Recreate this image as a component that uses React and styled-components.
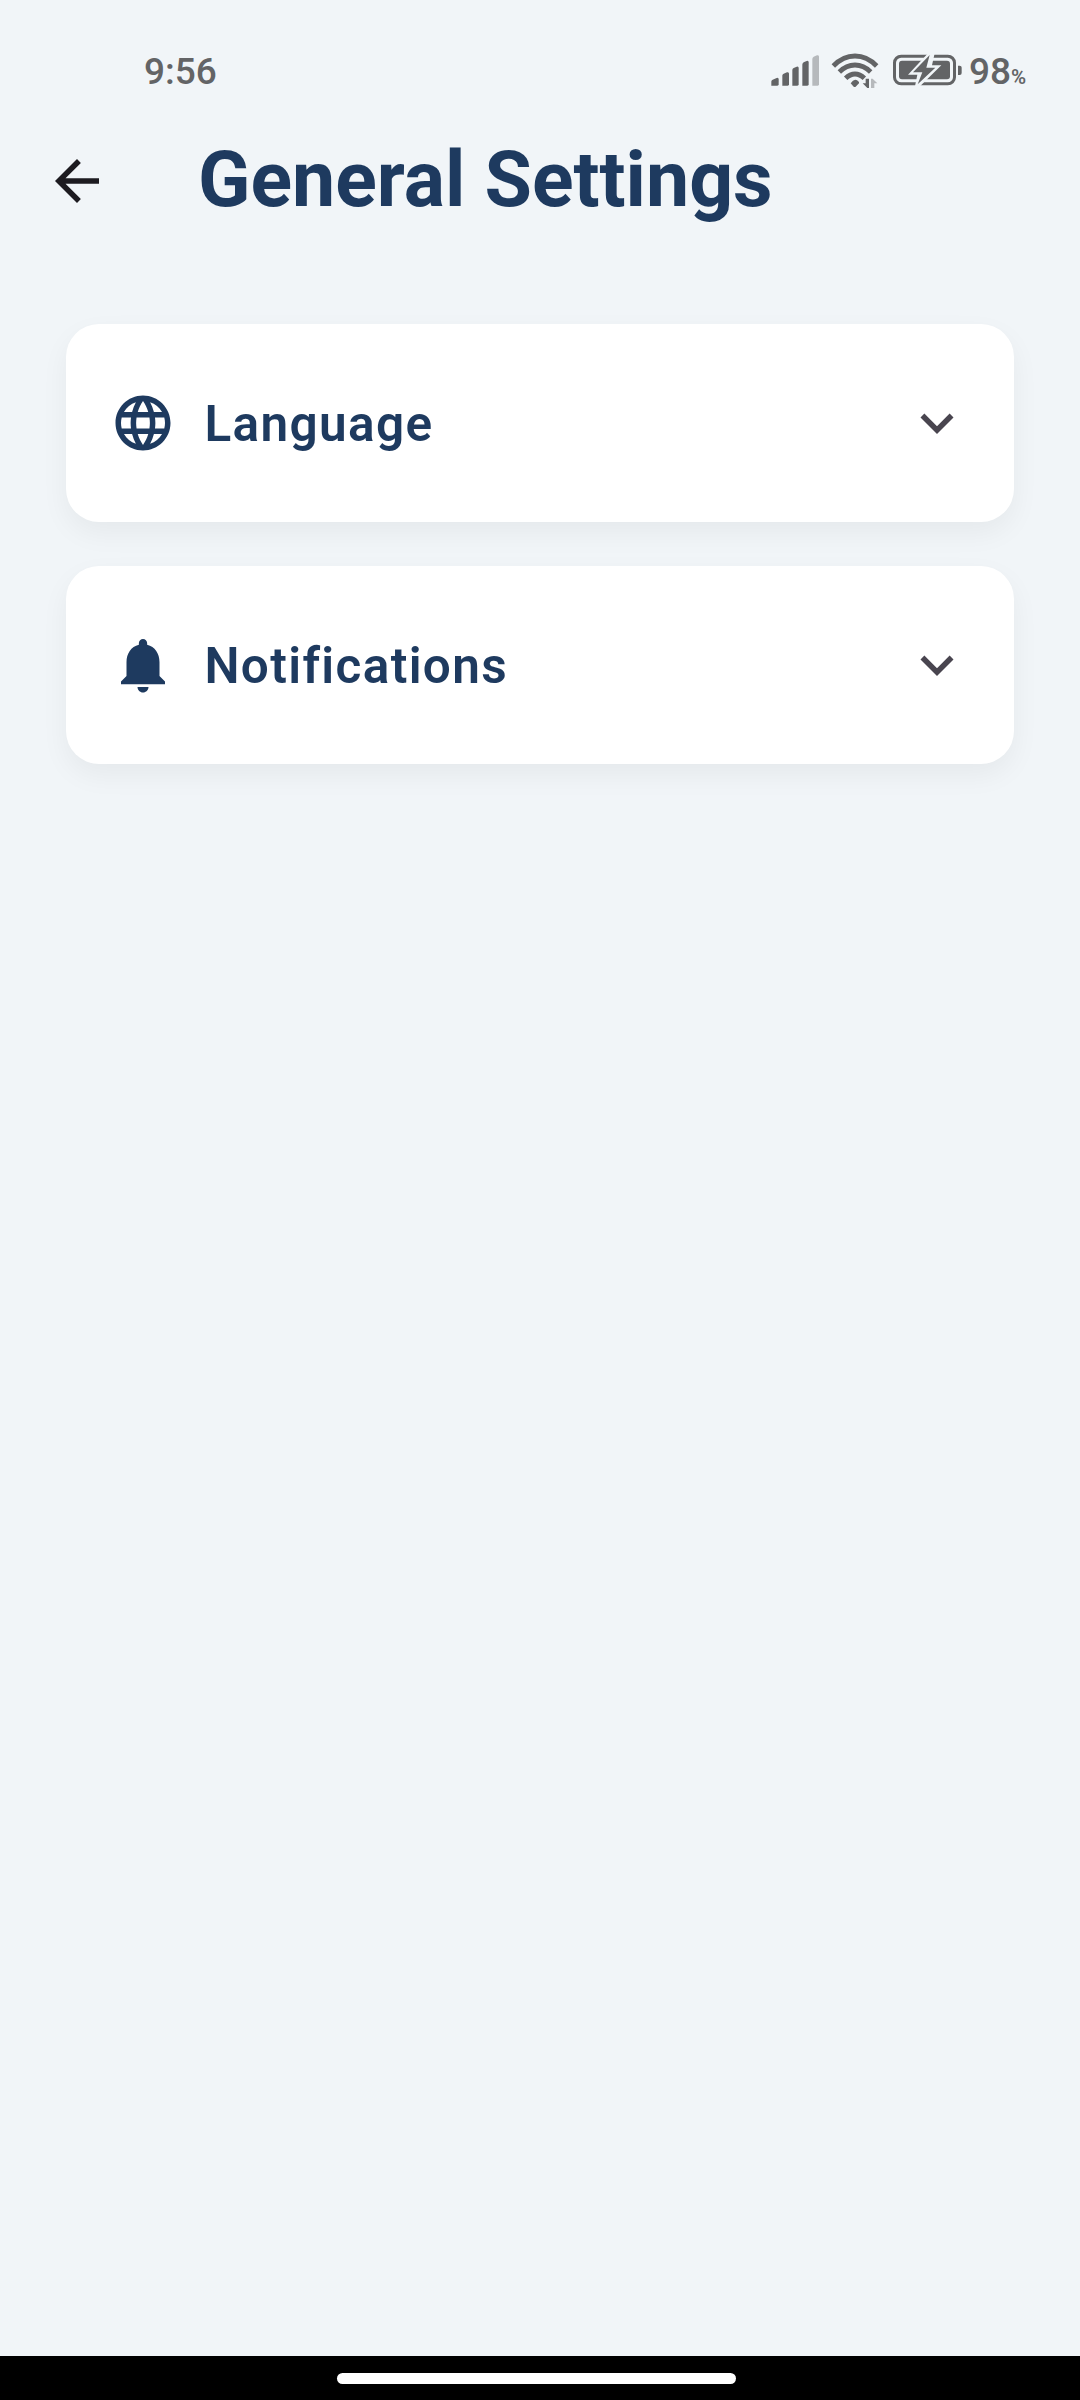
import React from "react";
import styled, { createGlobalStyle } from "styled-components";

const GlobalStyle = createGlobalStyle`
  *, *::before, *::after { box-sizing: border-box; }
  body {
    margin: 0;
    background: #f1f5f8;
    font-family: Roboto, "Noto Sans", sans-serif;
  }
`;

const Screen = styled.div`
  width: 1080px;
  height: 2400px;
  display: flex;
  flex-direction: column;
  background: #f1f5f8;
  overflow: hidden;
`;

const StatusBar = styled.header`
  height: 104px;
  flex: none;
  display: flex;
  justify-content: space-between;
  padding: 40px 0 0 144px;
  color: #636466;
`;

const Clock = styled.time`
  font-size: 37px;
  line-height: 44px;
  font-weight: 500;
  margin-top: 10px;
`;

const Indicators = styled.div`
  display: flex;
  width: 320px;
`;

const Glyphs = styled.svg`
  display: block;
  width: 209px;
  height: 60px;
  flex: none;
`;

const Battery = styled.span`
  display: flex;
  align-items: baseline;
  margin-top: 10px;
  font-size: 37px;
  line-height: 44px;
  font-weight: 500;
  height: 44px;
`;

const Percent = styled.span`
  font-size: 20.5px;
  line-height: 20px;
  font-weight: 600;
`;

const AppBar = styled.div`
  height: 154px;
  flex: none;
  display: flex;
  align-items: center;
  padding-left: 44px;
`;

const BackButton = styled.button`
  display: flex;
  padding: 0;
  border: 0;
  background: none;
  color: #1d1b20;
`;

const Title = styled.h1`
  margin: 0 0 2px 88px;
  color: #1e3a5f;
  font-size: 77px;
  line-height: 90px;
  font-weight: 700;
  white-space: nowrap;
`;

const Sections = styled.main`
  flex: 1;
  display: flex;
  flex-direction: column;
  gap: 44px;
  padding: 66px 66px 0;
`;

const Card = styled.section`
  height: 198px;
  display: flex;
  align-items: center;
  padding: 0 44px;
  border-radius: 33px;
  background: #fff;
  box-shadow: 0 11px 28px rgba(0, 0, 0, 0.05);
`;

const Icon = styled.svg`
  display: block;
  width: 66px;
  height: 66px;
  flex: none;
  fill: ${(p) => p.$color || "currentColor"};
`;

const Label = styled.h2`
  flex: 1;
  margin: 1px 0 0 28.5px;
  color: #1e3a5f;
  font-size: 49.5px;
  line-height: 60px;
  font-weight: 600;
  letter-spacing: 1.35px;
`;

const NavigationBar = styled.footer`
  height: 44px;
  flex: none;
  padding: 17px 0 0 337px;
  background: #000;
`;

const HomeHandle = styled.div`
  width: 399px;
  height: 11px;
  border-radius: 5.5px;
  background: #fff;
`;

const PATHS = {
  back: "M20 11H7.83l5.59-5.59L12 4l-8 8 8 8 1.41-1.41L7.83 13H20v-2z",
  language:
    "M11.99 2C6.47 2 2 6.48 2 12s4.47 10 9.99 10C17.52 22 22 17.52 22 12S17.52 2 11.99 2zm6.93 6h-2.95c-.32-1.25-.78-2.45-1.38-3.56 1.84.63 3.37 1.91 4.33 3.56zM12 4.04c.83 1.2 1.48 2.53 1.91 3.96h-3.82c.43-1.43 1.08-2.76 1.91-3.96zM4.26 14C4.1 13.36 4 12.69 4 12s.1-1.36.26-2h3.38c-.08.66-.14 1.32-.14 2s.06 1.34.14 2H4.26zm.82 2h2.95c.32 1.25.78 2.45 1.38 3.56-1.84-.63-3.37-1.9-4.33-3.56zm2.95-8H5.08c.96-1.66 2.49-2.93 4.33-3.56C8.81 5.55 8.35 6.75 8.03 8zM12 19.96c-.83-1.2-1.48-2.53-1.91-3.96h3.82c-.43 1.43-1.08 2.76-1.91 3.96zM14.34 14H9.66c-.09-.66-.16-1.32-.16-2s.07-1.35.16-2h4.68c.09.65.16 1.32.16 2s-.07 1.34-.16 2zm.25 5.56c.6-1.11 1.06-2.31 1.38-3.56h2.95c-.96 1.65-2.49 2.93-4.33 3.56zM16.36 14c.08-.66.14-1.32.14-2s-.06-1.34-.14-2h3.38c.16.64.26 1.31.26 2s-.1 1.36-.26 2h-3.38z",
  bell: "M12 22c1.1 0 2-.9 2-2h-4c0 1.1.9 2 2 2zm6-6v-5c0-3.07-1.63-5.64-4.5-6.32V4c0-.83-.67-1.5-1.5-1.5s-1.5.67-1.5 1.5v.68C7.64 5.36 6 7.92 6 11v5l-2 2v1h16v-1l-2-2z",
  expand: "M16.59 8.59L12 13.17 7.41 8.59 6 10l6 6 6-6z",
};

function MaterialIcon({ name, color }) {
  return (
    <Icon viewBox="0 0 24 24" $color={color} aria-hidden="true">
      <path d={PATHS[name]} />
    </Icon>
  );
}

function StatusGlyphs() {
  return (
    <Glyphs viewBox="0 0 627 180" fill="#636466" aria-hidden="true">
      <path d="M34 137V125Q34 121 38 119L50 114Q56 112 56 118V133Q56 137 52 137Z" />
      <path d="M67 137V107Q67 103 71 101L81 97Q87 95 87 101V133Q87 137 83 137Z" />
      <path d="M97 137V90Q97 86 101 84L110 80Q116 78 116 84V133Q116 137 112 137Z" />
      <path d="M127 137V74Q127 69 131 67L140 63Q146 61 146 67V133Q146 137 142 137Z" />
      <path d="M157 137V57Q157 52 161 50L171 46Q177 44 177 50V133Q177 137 173 137Z" fill="#b6b9bc" />
      <g fill="none" stroke="#636466" strokeWidth="14.5">
        <path d="M220 78Q249 48 285 48Q321 48 350 78" />
        <path d="M238 96Q259 75 285 75Q311 75 332 96" />
        <path d="M257 115Q270 102 285 102Q300 102 313 115" />
      </g>
      <path d="M272 130Q284 111 297 126V130L287 140Q284 142 281 140Z" />
      <path d="M317 116H327V144H322L308 130H317Z" />
      <path d="M333 144V116H338L352 130H343V144Z" fill="#b6b9bc" />
      <rect x="403.500" y="48.500" width="180" height="83" rx="20" fill="none" stroke="#636466" strokeWidth="9" />
      <rect x="417" y="62" width="153" height="56" rx="9" />
      <path d="M594 77H599Q605 77 605 83V99Q605 105 599 105H594Z" />
      <path d="M504 40L444 104H472L465 139H480L544 76H516L524 40Z" fill="#f1f5f8" />
      <path d="M509 45L459 97H487L473 133L526 83H499Z" />
    </Glyphs>
  );
}

const SECTIONS = [
  { icon: "language", label: "Language" },
  { icon: "bell", label: "Notifications" },
];

export default function App() {
  return (
    <>
      <GlobalStyle />
      <Screen>
        <StatusBar>
          <Clock>9:56</Clock>
          <Indicators>
            <StatusGlyphs />
            <Battery>
              98<Percent>%</Percent>
            </Battery>
          </Indicators>
        </StatusBar>
        <AppBar>
          <BackButton aria-label="Back">
            <MaterialIcon name="back" />
          </BackButton>
          <Title>General Settings</Title>
        </AppBar>
        <Sections>
          {SECTIONS.map(({ icon, label }) => (
            <Card key={label}>
              <MaterialIcon name={icon} color="#1e3a5f" />
              <Label>{label}</Label>
              <MaterialIcon name="expand" color="#49454f" />
            </Card>
          ))}
        </Sections>
        <NavigationBar>
          <HomeHandle />
        </NavigationBar>
      </Screen>
    </>
  );
}
